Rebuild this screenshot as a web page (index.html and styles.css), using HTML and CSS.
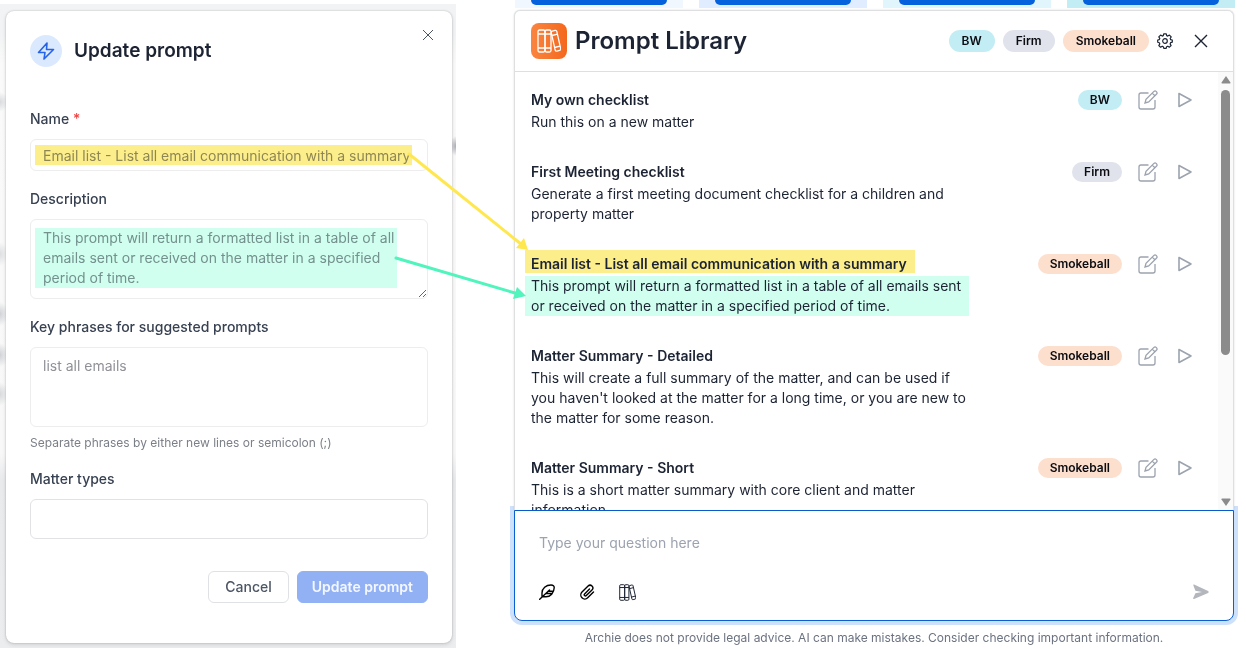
FILE: index.html
```html
<!DOCTYPE html>
<html lang="en">
<head>
  <meta charset="utf-8">
  <title>Prompt Library</title>
  <link rel="stylesheet" href="styles.css">
</head>
<body>
  <!-- shared icons -->
  <svg class="sprite" aria-hidden="true">
    <symbol id="icon-books" viewBox="0 0 24 24">
      <rect x="1" y="1" width="7" height="22" rx="1.5"/>
      <rect x="8" y="1" width="6" height="22" rx="1.5"/>
      <path d="M1 5h13M1 19h13"/>
      <path d="M15.3 2.2l2.8-.8a1.4 1.4 0 0 1 1.7 1l3.9 17.2a1.4 1.4 0 0 1-1 1.7l-2.8.8a1.4 1.4 0 0 1-1.7-1L14.300 3.900a1.4 1.4 0 0 1 1-1.700zM15 6.500l5.500-1.400M17.600 18.500l5.300-1.400"/>
    </symbol>
    <symbol id="icon-edit" viewBox="0 0 20 20">
      <path d="M10.500 3H3a2 2 0 0 0-2 2v12a2 2 0 0 0 2 2h12a2 2 0 0 0 2-2V10"/>
      <path d="M7 13l1-3.700 7.700-7.700a1.900 1.900 0 0 1 2.700 2.700L10.700 12 7 13zM14.200 3.100l2.700 2.700"/>
    </symbol>
    <symbol id="icon-play" viewBox="0 0 16 16">
      <path d="M2 1.500v13L14 8z"/>
    </symbol>
  </svg>

  <div class="layout">
    <section class="backdrop">
      <form class="dialog">
        <button type="button" class="icon-btn dialog-close" aria-label="Close">
          <svg width="12" height="12" viewBox="0 0 12 12"><path d="M1 1l10 10M11 1L1 11"/></svg>
        </button>
        <div class="dialog-header">
          <span class="bolt">
            <svg width="20" height="20" viewBox="0 0 20 20"><path d="M11 2L2.500 11.500H9L8 18l9.500-9.500H10.500z"/></svg>
          </span>
          <h2>Update prompt</h2>
        </div>

        <div class="field">
          <label for="name">Name <span class="required">*</span></label>
          <div class="control mark-name">
            <input type="text" id="name" value="Email list - List all email communication with a summary">
          </div>
        </div>
        <div class="field">
          <label for="description">Description</label>
          <div class="control mark-description">
            <textarea id="description" class="resizable">This prompt will return a formatted list in a table of all emails sent or received on the matter in a specified period of time.</textarea>
          </div>
        </div>
        <div class="field">
          <label for="phrases">Key phrases for suggested prompts</label>
          <div class="control"><textarea id="phrases">list all emails</textarea></div>
          <p class="help">Separate phrases by either new lines or semicolon (;)</p>
        </div>
        <div class="field">
          <label for="types">Matter types</label>
          <div class="control"><input type="text" id="types" class="tall"></div>
        </div>

        <div class="dialog-actions">
          <button type="button" class="btn">Cancel</button>
          <button type="button" class="btn btn-primary">Update prompt</button>
        </div>
      </form>
    </section>

    <section class="assistant">
      <div class="cards">
        <div class="card card-1"><span></span></div>
        <div class="card card-2"><span></span></div>
        <div class="card card-3"><span></span></div>
        <div class="card card-4"><span></span></div>
      </div>

      <div class="library">
        <div class="library-header">
          <span class="logo"><svg width="24" height="24"><use href="#icon-books"/></svg></span>
          <h1>Prompt Library</h1>
          <div class="filters">
            <button type="button" class="tag tag-bw">BW</button>
            <button type="button" class="tag tag-firm">Firm</button>
            <button type="button" class="tag tag-smokeball">Smokeball</button>
          </div>
          <button type="button" class="icon-btn settings" aria-label="Settings">
            <svg width="16" height="16" viewBox="0 0 16 16">
              <path d="M6.700.8h2.600l.4 1.800 1.100.5 1.600-1 1.800 1.800-1 1.600.4 1.100 1.700.4v2.200l-1.700.5-.5 1.200 1 1.600-1.700 1.700-1.600-1-1.200.5-.4 1.600H6.800l-.5-1.600-1.100-.5-1.600 1-1.800-1.700 1-1.600-.5-1.200-1.600-.5V7l1.600-.4.5-1.100-1-1.600 1.800-1.800 1.600 1 1.100-.5z"/>
              <circle cx="8" cy="8" r="2.300"/>
            </svg>
          </button>
          <button type="button" class="icon-btn close" aria-label="Close library">
            <svg width="14" height="14" viewBox="0 0 14 14"><path d="M1 1l12 12M13 1L1 13"/></svg>
          </button>
        </div>

        <div class="library-body">
          <ul class="prompts">
            <li class="prompt">
              <div class="prompt-text">
                <h3>My own checklist</h3>
                <p>Run this on a new matter</p>
              </div>
              <span class="tag tag-bw">BW</span>
              <button type="button" class="icon-btn edit" aria-label="Edit"><svg width="20" height="20"><use href="#icon-edit"/></svg></button>
              <button type="button" class="icon-btn play" aria-label="Run"><svg width="16" height="16"><use href="#icon-play"/></svg></button>
            </li>
            <li class="prompt">
              <div class="prompt-text">
                <h3>First Meeting checklist</h3>
                <p>Generate a first meeting document checklist for a children and property matter</p>
              </div>
              <span class="tag tag-firm">Firm</span>
              <button type="button" class="icon-btn edit" aria-label="Edit"><svg width="20" height="20"><use href="#icon-edit"/></svg></button>
              <button type="button" class="icon-btn play" aria-label="Run"><svg width="16" height="16"><use href="#icon-play"/></svg></button>
            </li>
            <li class="prompt">
              <div class="prompt-text">
                <h3><span class="mark-title">Email list - List all email communication with a summary</span></h3>
                <p class="mark-body">This prompt will return a formatted list in a table of all emails sent or received on the matter in a specified period of time.</p>
              </div>
              <span class="tag tag-smokeball">Smokeball</span>
              <button type="button" class="icon-btn edit" aria-label="Edit"><svg width="20" height="20"><use href="#icon-edit"/></svg></button>
              <button type="button" class="icon-btn play" aria-label="Run"><svg width="16" height="16"><use href="#icon-play"/></svg></button>
            </li>
            <li class="prompt">
              <div class="prompt-text">
                <h3>Matter Summary - Detailed</h3>
                <p>This will create a full summary of the matter, and can be used if you haven't looked at the matter for a long time, or you are new to the matter for some reason.</p>
              </div>
              <span class="tag tag-smokeball">Smokeball</span>
              <button type="button" class="icon-btn edit" aria-label="Edit"><svg width="20" height="20"><use href="#icon-edit"/></svg></button>
              <button type="button" class="icon-btn play" aria-label="Run"><svg width="16" height="16"><use href="#icon-play"/></svg></button>
            </li>
            <li class="prompt">
              <div class="prompt-text">
                <h3>Matter Summary - Short</h3>
                <p>This is a short matter summary with core client and matter information.</p>
              </div>
              <span class="tag tag-smokeball">Smokeball</span>
              <button type="button" class="icon-btn edit" aria-label="Edit"><svg width="20" height="20"><use href="#icon-edit"/></svg></button>
              <button type="button" class="icon-btn play" aria-label="Run"><svg width="16" height="16"><use href="#icon-play"/></svg></button>
            </li>
          </ul>
          <div class="scrollbar">
            <svg width="10" height="8" viewBox="0 0 10 8"><path d="M5 0l4.500 6.500q.3 1-.8 1H1.300q-1.100 0-.8-1z"/></svg>
            <span class="thumb"></span>
            <svg width="10" height="8" viewBox="0 0 10 8"><path d="M5 8l4.500-6.500q.3-1-.8-1H1.300q-1.100 0-.8 1z"/></svg>
          </div>
        </div>
      </div>

      <div class="composer">
        <textarea placeholder="Type your question here" aria-label="Question"></textarea>
        <div class="tools">
          <button type="button" class="icon-btn" aria-label="Draft">
            <svg width="16" height="16" viewBox="0 0 16 16" class="feather"><path d="M.7 15.300L10.500 6M3 12.800V9C3 4.500 7 1 12 1c2.200 0 3.300 1 3.200 2.800C15 8.800 11.500 12.800 7 12.800zM7 9.500h5.500M9 7.300h5"/></svg>
          </button>
          <button type="button" class="icon-btn" aria-label="Attach">
            <svg width="16" height="16" viewBox="0 0 16 16" class="clip"><path d="M10.500 5L5.600 9.900a1.200 1.200 0 0 0 1.700 1.700l5.700-5.700a2.700 2.700 0 0 0-3.900-3.900L3 8.100a4 4 0 0 0 5.700 5.700l5.800-5.800"/></svg>
          </button>
          <button type="button" class="icon-btn" aria-label="Prompt library"><svg width="17" height="17" class="books"><use href="#icon-books"/></svg></button>
          <button type="button" class="icon-btn send" aria-label="Send">
            <svg width="18" height="16" viewBox="0 0 18 16"><path d="M1.300 1.200q-.3-1 .8-.7l14 6.600q1.400.9 0 1.800l-14 6q-1.300.3-.9-.8L3.400 9.300 10 8 3.400 6.700z"/></svg>
          </button>
        </div>
      </div>
      <p class="disclaimer">Archie does not provide legal advice. AI can make mistakes. Consider checking important information.</p>
    </section>
  </div>

  <!-- arrows from the form fields to the list entry -->
  <svg class="arrows" width="540" height="320" aria-hidden="true">
    <path class="line-yellow" d="M409 154L521 244"/>
    <path class="head-yellow" d="M528 250l-12-2 8-10z"/>
    <path class="line-green" d="M396 258L515 293"/>
    <path class="head-green" d="M526 296l-13 3 4-12z"/>
  </svg>
</body>
</html>
```
FILE: styles.css
```css
* {
  box-sizing: border-box;
}
body {
  margin: 0;
  background-color: #fff;
  color: #1c2333;
  font-family: Inter, "Liberation Sans", sans-serif;
  font-size: 14px;
  line-height: 20px;
}
h1, h2, h3, p, ul {
  margin: 0;
  padding: 0;
}
button, input, textarea {
  font: inherit;
  color: inherit;
}
svg {
  display: block;
  fill: none;
  stroke: currentColor;
}
.sprite {
  position: absolute;
  width: 0;
  height: 0;
}
.layout {
  display: grid;
  grid-template-columns: minmax(0, 19fr) minmax(0, 30fr);
  column-gap: 58px;
  padding-right: 12px;
}
.icon-btn {
  display: flex;
  align-items: center;
  justify-content: center;
  padding: 0;
  border: none;
  background: none;
  cursor: pointer;
}

/* update prompt dialog */
.backdrop {
  margin-top: 4px;
  padding: 7px 4px 4px 6px;
  background:
    radial-gradient(ellipse 6px 10px at 100% 142px, #a9abb3, transparent),
    radial-gradient(ellipse 8px 10px at 0 98px, #d8dadd, transparent),
    radial-gradient(ellipse 8px 12px at 0 250px, #dcdee0, transparent),
    radial-gradient(ellipse 8px 12px at 0 310px, #cfd1d5, transparent),
    radial-gradient(ellipse 8px 12px at 0 351px, #cfd1d5, transparent),
    radial-gradient(ellipse 8px 12px at 0 390px, #d6d8da, transparent),
    linear-gradient(#f2f3f4 30px, #fafafa 60px, #f8f8f8 450px, #e9eaec 475px, #ecedef);
}
.dialog {
  position: relative;
  padding: 24px 24px 40px;
  border-radius: 8px;
  background-color: #fff;
  box-shadow: 0 0 2px rgba(0, 0, 0, 0.25), 0 2px 4px rgba(0, 0, 0, 0.1);
}
.dialog-close {
  position: absolute;
  top: 16px;
  right: 16px;
  width: 16px;
  height: 16px;
  color: #4b5563;
}
.dialog-header {
  display: flex;
  align-items: center;
  gap: 12px;
  margin-bottom: 42px;
}
.dialog-header h2 {
  font-size: 19px;
  line-height: 32px;
  font-weight: 600;
}
.bolt {
  display: flex;
  align-items: center;
  justify-content: center;
  width: 32px;
  height: 32px;
  border-radius: 50%;
  background-color: #dbe9fe;
  color: #2563eb;
}
.bolt svg {
  stroke-width: 1.6;
  stroke-linejoin: round;
}
.field {
  margin-bottom: 18px;
}
.field label {
  display: block;
  margin-bottom: 10px;
  font-weight: 500;
  color: #374151;
}
.required {
  color: #ef4444;
}
.control {
  position: relative;
}
.field input, .field textarea {
  display: block;
  width: 100%;
  height: 32px;
  padding: 5px 12px;
  border: 1px solid #ededee;
  border-radius: 6px;
  outline: none;
  background-color: #fff;
  color: #8f9197;
}
.field textarea {
  height: 80px;
  padding-top: 8px;
  resize: none;
  overflow: hidden;
}
.field textarea.resizable {
  resize: vertical;
}
.field input.tall {
  height: 40px;
  border-color: #e2e2e5;
}
.mark-name::after, .mark-description::after {
  content: "";
  position: absolute;
  left: 5px;
  mix-blend-mode: multiply;
  pointer-events: none;
}
.mark-name::after {
  top: 6px;
  right: 16px;
  height: 20px;
  background-color: #fdee8c;
}
.mark-description::after {
  top: 9px;
  right: 31px;
  height: 60px;
  background-color: #d0ffef;
}
.help {
  margin-top: 8px;
  font-size: 12px;
  line-height: 16px;
  color: #7b7f87;
}
.dialog-actions {
  display: flex;
  justify-content: flex-end;
  gap: 8px;
  margin-top: 32px;
}
.btn {
  height: 32px;
  padding: 0 16px;
  border: 1px solid #dfe1e4;
  border-radius: 6px;
  background-color: #fff;
  color: #4b5563;
  font-weight: 500;
}
.btn-primary {
  padding: 0 14px;
  border-color: #92b1f5;
  background-color: #92b1f5;
  color: #f4f7fe;
  font-weight: 600;
}

/* assistant column */
.cards {
  display: grid;
  grid-template-columns: repeat(4, 1fr);
  gap: 16px;
  height: 10px;
  margin-right: -1px;
  padding: 0 0 2px 1px;
}
.card {
  padding: 0 16px;
}
.card span {
  display: block;
  height: 5px;
  border-radius: 0 0 6px 6px;
  background-color: #0562dc;
}
.card-1 { background-color: #f0f7ff; }
.card-2 { background-color: #e0ecff; }
.card-3 { background-color: #e0f6fc; }
.card-4 { background-color: #c3edf4; }

.library {
  position: relative;
  z-index: 1;
  border: 1px solid #dedfe1;
  border-bottom: none;
  border-radius: 6px 6px 0 0;
  background-color: #fff;
  box-shadow: 0 0 2px rgba(0, 0, 0, 0.15);
}
.library-header {
  display: flex;
  align-items: center;
  height: 61px;
  padding: 0 24px 0 16px;
  border-bottom: 1px solid #dedfe1;
}
.library-header h1 {
  margin-left: 8px;
  font-size: 24px;
  line-height: 32px;
  font-weight: 600;
}
.logo {
  display: flex;
  align-items: center;
  justify-content: center;
  width: 36px;
  height: 36px;
  border-radius: 8px;
  background: linear-gradient(90deg, #fa8540, #f4681d);
  color: #fff;
}
.logo svg {
  stroke-width: 1.3;
}
.filters {
  display: flex;
  gap: 8px;
  margin-left: auto;
}
.tag {
  padding: 0 12px;
  border: none;
  border-radius: 12px;
  color: #0b0d12;
  font-size: 12px;
  line-height: 20px;
  font-weight: 600;
}
.filters .tag {
  padding: 0 13px;
  line-height: 22px;
}
.tag-bw { background-color: #c2edf4; }
.tag-firm { background-color: #e0e3ec; }
.tag-smokeball { background-color: #fddfce; }
.settings {
  margin-left: 8px;
}
.settings svg {
  stroke-width: 1.2;
  stroke-linejoin: round;
}
.close {
  width: 16px;
  margin-left: 20px;
}
.close svg {
  stroke-width: 1.4;
}
.library-body {
  display: flex;
  height: 438px;
  overflow: hidden;
}
.prompts {
  flex: 1;
  padding: 16px 25px 0 16px;
  list-style: none;
}
.prompt {
  display: flex;
  align-items: flex-start;
  margin-bottom: 28px;
}
.prompt-text {
  width: 67%;
  margin-right: auto;
}
.prompt h3 {
  font-size: 14px;
  line-height: 24px;
  font-weight: 600;
}
.prompt .tag {
  margin-top: 2px;
}
.prompt .icon-btn {
  height: 24px;
  color: #9ca3af;
}
.edit {
  margin-left: 16px;
}
.edit svg {
  stroke-width: 1.3;
}
.play {
  margin-left: 19px;
}
.play svg {
  stroke-width: 1.6;
  stroke-linejoin: round;
}
.mark-title {
  margin-left: -6px;
  padding: 5px 8px 1px 6px;
  background-color: #fdee8c;
}
.mark-body {
  margin: 0 6px 0 -6px;
  padding-left: 6px;
  background-color: #d0ffef;
}
.scrollbar {
  display: flex;
  flex-direction: column;
  align-items: center;
  gap: 6px;
  width: 15px;
  padding: 4px 0;
  background-color: #fafafa;
}
.scrollbar svg {
  fill: #8b8b8b;
  stroke: none;
}
.scrollbar svg:last-child {
  margin-top: auto;
}
.thumb {
  width: 9px;
  height: 265px;
  border-radius: 5px;
  background-color: #8b8b8b;
}

.composer {
  padding: 22px 24px 20px;
  border: 1px solid #0a5fd3;
  border-radius: 0 0 8px 8px;
  background-color: #fff;
  box-shadow: 0 0 0 4px #cde1fc;
}
.composer textarea {
  display: block;
  width: 100%;
  height: 40px;
  padding: 0;
  border: none;
  outline: none;
  resize: none;
}
.composer textarea::placeholder {
  color: #9ca3af;
}
.tools {
  display: flex;
  align-items: center;
  gap: 24px;
  height: 16px;
  margin-top: 11px;
}
.tools .icon-btn {
  width: 16px;
}
.tools svg {
  flex-shrink: 0;
}
.feather, .clip {
  color: #000;
  stroke-width: 1.4;
  stroke-linecap: round;
  stroke-linejoin: round;
}
.books {
  stroke-width: 1.4;
}
.tools .send {
  margin-left: auto;
}
.send svg {
  fill: #b3b6bc;
  stroke: none;
}
.disclaimer {
  margin-top: 7px;
  font-size: 12px;
  text-align: center;
  color: #6b7280;
}

.arrows {
  position: absolute;
  top: 0;
  left: 0;
  z-index: 2;
  stroke-width: 3;
  stroke-linecap: round;
  pointer-events: none;
}
.line-yellow { stroke: #ffe74f; }
.head-yellow { fill: #ffe74f; stroke: none; }
.line-green { stroke: #50f4bd; }
.head-green { fill: #50f4bd; stroke: none; }
```
